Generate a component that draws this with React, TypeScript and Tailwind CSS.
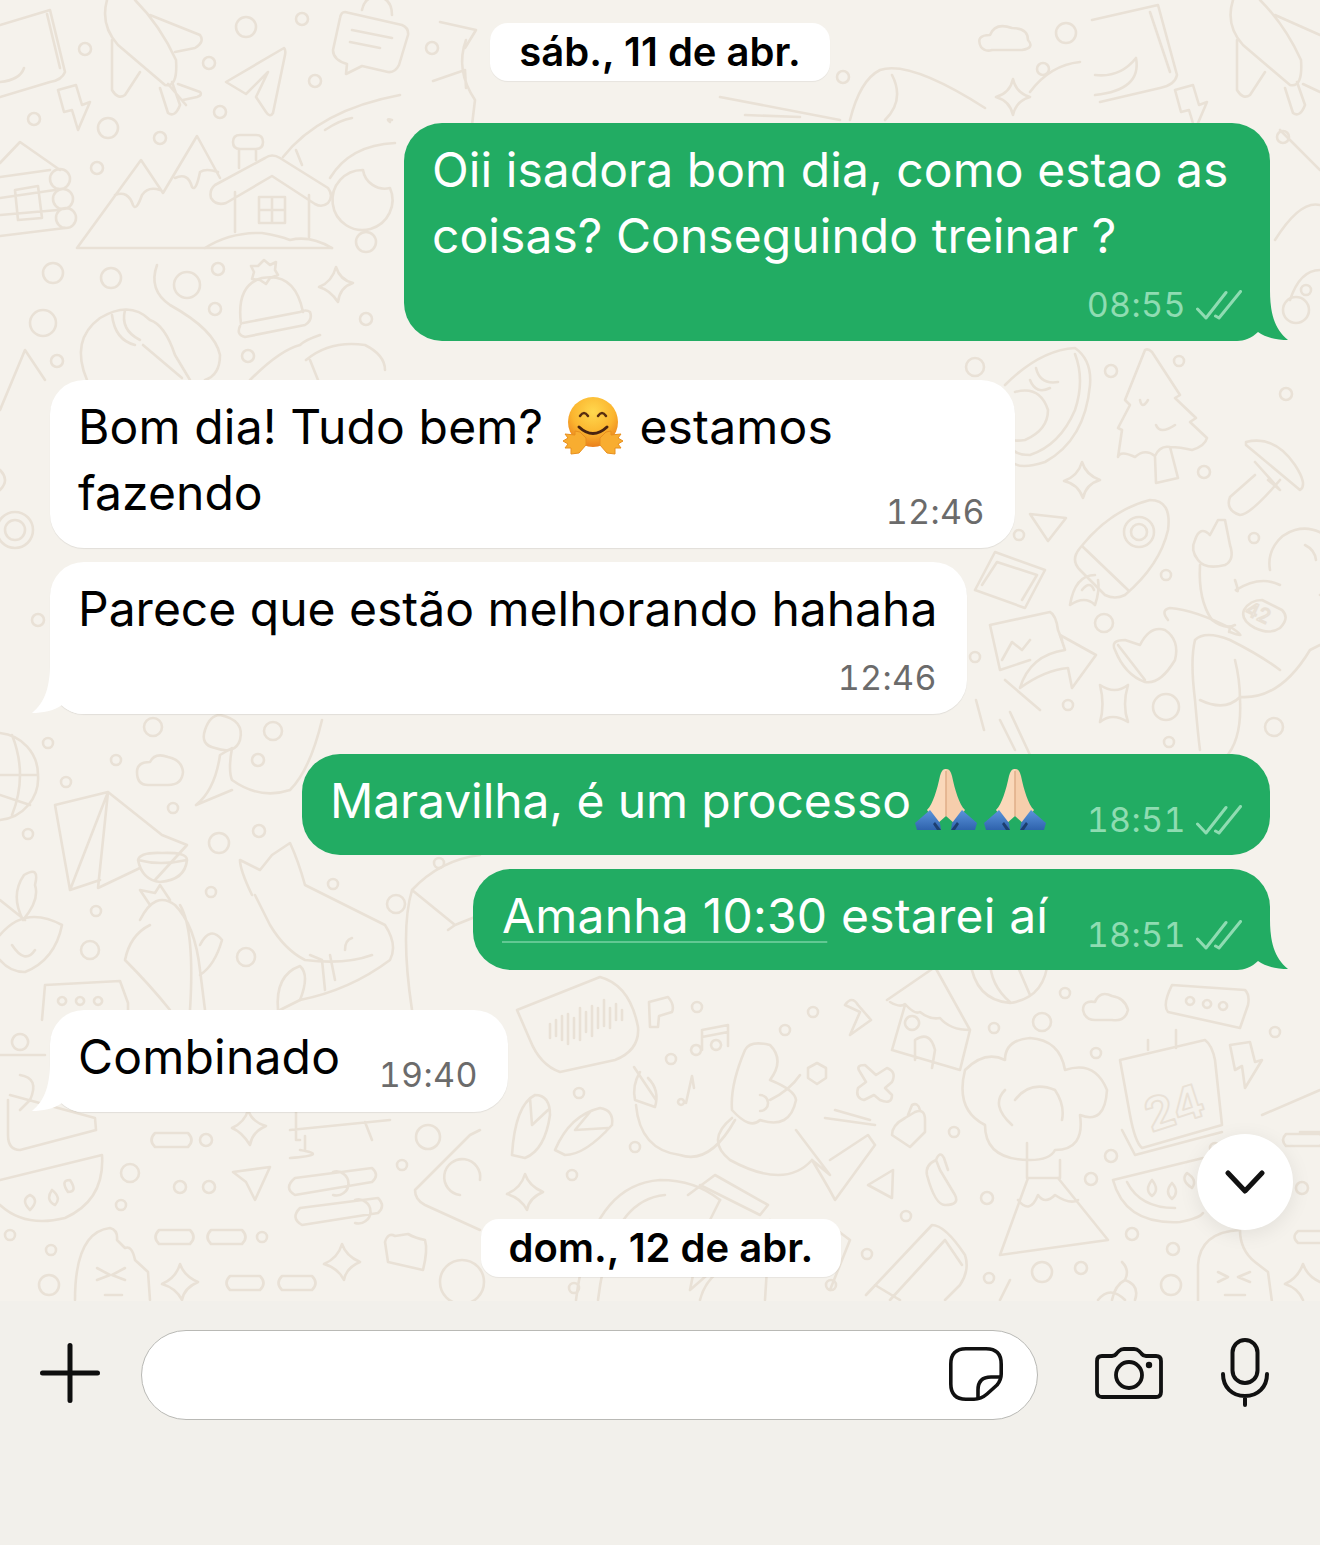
import type { ReactNode } from "react";

const circles: [number, number, number][] = [
  [34, 119, 6], [108, 128, 10], [160, 138, 6], [220, 112, 6], [97, 168, 6], [53, 273, 10], [111, 278, 10],
  [187, 285, 13], [218, 269, 6], [215, 309, 6], [366, 242, 10], [366, 319, 6], [43, 323, 13], [57, 361, 6],
  [248, 356, 6], [85, 49, 6], [246, 27, 10], [302, 19, 6], [209, 63, 6], [315, 81, 6], [432, 48, 6],
  [48, 743, 5], [116, 760, 5], [153, 727, 9], [273, 731, 9], [258, 760, 6], [66, 782, 5], [173, 808, 5],
  [28, 834, 5], [259, 831, 6], [219, 843, 10], [439, 863, 5], [211, 892, 5], [333, 884, 5], [96, 911, 5],
  [396, 904, 9], [90, 950, 9], [246, 957, 9], [428, 1137, 12], [206, 1140, 6], [402, 1165, 5], [130, 1173, 9],
  [180, 1187, 6], [209, 1187, 6], [121, 1205, 5], [10, 1235, 5], [51, 1250, 5], [262, 1237, 5], [49, 1285, 10],
  [462, 1282, 22], [975, 367, 9], [1111, 371, 6], [1179, 361, 5], [1286, 394, 6], [1204, 472, 6], [1019, 535, 5],
  [1254, 538, 5], [1166, 575, 5], [1104, 623, 9], [975, 657, 5], [1068, 705, 5], [1166, 707, 13], [1274, 727, 9],
  [1169, 742, 5], [697, 1007, 5], [813, 1012, 5], [785, 1030, 5], [1065, 993, 5], [1042, 1022, 9], [994, 1028, 5],
  [1275, 1032, 5], [1096, 1053, 5], [671, 1059, 5], [579, 1093, 5], [635, 1147, 5], [572, 1175, 5], [954, 1132, 5],
  [987, 1198, 6], [906, 1216, 5], [1042, 1272, 10], [1081, 1268, 6], [989, 1278, 5], [1111, 1156, 6], [1091, 1179, 6],
  [1132, 1234, 6], [1173, 1249, 6], [1171, 1285, 10], [1302, 1188, 6], [867, 1254, 5], [831, 1285, 5], [574, 1288, 5],
  [1066, 33, 10], [1043, 69, 6], [843, 77, 6], [1283, 137, 6], [15, 530, 18], [15, 530, 10], [1296, 310, 13],
  [1139, 532, 15], [1139, 532, 8], [38, 620, 6], [1306, 290, 5], [470, 1105, 5], [1215, 1148, 5],
];

const paths: string[] = [
  // top left: book, rocket, plane, chat bubble, sun
  "M0 25L50 10L65 72Q62 80 50 82L0 97M47 14L60 68M0 82Q20 80 24 68",
  "M107 0Q100 25 118 45L165 85Q178 88 176 60Q160 25 135 0M150 15L200 35Q205 42 195 48L175 52M112 40V90Q118 100 125 95L140 72",
  "M160 88L168 113Q175 118 180 105L172 82M178 84L200 92Q203 95 197 97L183 100M168 84L186 105",
  "M226 82L284 48Q286 50 285 55L273 113Q270 118 266 112L256 97L268 72L246 94Z",
  "M345 12L402 25Q409 28 408 35L399 65Q395 73 388 72L362 66L346 74L347 64Q333 60 333 50L340 18Q341 12 345 12ZM362 10Q365 -5 380 -3Q392 0 392 15M352 30L392 38M350 42L380 48",
  "M58 90L76 85L82 105L90 102L78 130L72 110L64 112Z",
  "M440 22L476 30L465 48M433 81L465 70L466 88M475 100L472 125M466 40Q455 70 475 100",
  // mountains and house
  "M77 248H332M77 248L141 160L163 193L197 136L220 178M115 195Q128 190 133 205Q136 212 142 195Q148 186 160 190M175 178Q188 172 192 187Q196 192 200 172Q206 168 218 172",
  "M215 185L265 158Q272 153 280 158L328 188Q334 196 328 203Q322 208 315 204L272 176L226 203Q216 206 211 198Q209 190 215 185ZM235 192V232M309 195V237M259 197H285V223H259ZM272 197V223M259 210H285",
  "M239 149V168M256 149V160M240 135H256Q263 135 263 142Q263 149 256 149H240Q233 149 233 142Q233 135 240 135Z",
  "M205 248Q230 232 262 233Q280 236 290 240Q310 235 332 248",
  "M0 163L20 142L60 170M0 177L50 170M0 198L55 190M0 215L58 210M0 236L65 228M15 190L38 186L42 218L18 220Z",
  "M60 169A10 10 0 1 1 60 189A10 10 0 1 1 60 169M63 189A10 10 0 1 1 63 209A10 10 0 1 1 63 189M66 208A10 10 0 1 1 66 228A10 10 0 1 1 66 208",
  "M363 170A30 30 0 1 0 390 188A22 22 0 0 1 363 170Z",
  "M283 157Q320 110 400 95M325 130Q340 120 352 118M392 120Q385 118 390 122M330 178Q350 145 395 143M296 150L302 165",
  "M241 324Q236 285 262 278Q295 272 303 312M240 326Q236 335 245 337L305 325Q313 320 310 312Q306 309 300 312L243 323",
  "M264 260L270 265L276 262L275 270L278 275L270 278L266 284L260 280L252 279L254 272L251 266L258 266Z",
  "M336 267Q340 280 353 283Q340 287 338 302Q330 290 319 287Q332 282 336 267Z",
  "M157 265Q148 290 170 305Q215 330 220 355Q220 375 205 380M87 380Q70 340 100 318Q130 300 150 320Q165 325 175 355L190 380M112 315Q115 340 135 345M125 310Q120 330 140 340M143 345L182 378",
  "M250 380Q280 350 300 345Q305 340 320 335M306 360Q330 340 365 345Q385 355 385 370M310 360L318 380",
  "M0 410L25 350L45 380M0 470Q10 480 0 490",
  // right side
  "M1005 385Q1040 350 1075 348Q1092 360 1090 385Q1085 440 1045 462Q1020 470 1012 462M1075 354Q1085 380 1075 410Q1060 445 1030 455Q1015 455 1012 448M1015 392Q1040 385 1048 410Q1048 430 1025 440Q1012 442 1012 438",
  "M1036 368Q1040 385 1058 382M1030 380Q1036 395 1050 388",
  "M1145 350Q1148 348 1152 352L1180 395L1175 398L1196 418L1190 422L1207 438Q1205 446 1192 450Q1180 447 1170 447Q1160 445 1155 456Q1145 448 1135 457Q1120 450 1118 457L1122 430L1118 428L1130 405L1125 400ZM1155 457L1156 483L1178 478L1170 447M1140 400Q1142 410 1148 400M1156 425Q1160 435 1175 425",
  "M1246 442Q1275 435 1295 465Q1308 485 1300 490L1246 445ZM1255 462L1280 490L1268 480M1255 475L1230 497Q1225 510 1240 515Q1250 515 1280 480",
  "M1082 462Q1086 475 1100 480Q1086 484 1083 498Q1078 484 1064 481Q1078 476 1082 462Z",
  "M1030 514L1066 518L1048 541Z",
  "M1080 548Q1110 510 1150 500Q1172 500 1168 530Q1160 565 1125 595Q1115 600 1105 595L1080 570Q1070 560 1080 548ZM1082 546L1128 590",
  "M1095 575Q1075 575 1070 605Q1085 595 1095 605Q1100 590 1098 580M1082 590Q1090 580 1094 590",
  "M1195 540Q1200 525 1210 535L1218 520L1225 520L1230 545Q1235 560 1225 565Q1205 570 1198 560Q1190 550 1195 540ZM1200 565Q1198 600 1212 620Q1225 630 1235 625M1235 580Q1240 595 1236 590",
  "M1270 570A35 35 0 1 1 1320 595M1305 545Q1315 550 1316 560M1236 590Q1260 575 1280 585M1232 628Q1250 640 1230 632",
  "M1244 610Q1250 600 1262 600L1282 610Q1290 618 1280 628Q1270 635 1255 628Q1240 620 1244 610Z",
  "M1168 620Q1160 610 1170 608Q1195 610 1230 628L1229 632M1115 650Q1110 640 1125 640L1140 645Q1150 625 1165 630Q1180 640 1175 660Q1160 685 1145 682Q1125 675 1115 650ZM1118 645L1145 680",
  "M1195 640Q1205 630 1230 640Q1260 655 1280 670M1195 640Q1190 660 1195 700Q1198 735 1200 750M1235 660Q1240 680 1240 700Q1242 740 1225 758M1200 700Q1225 712 1240 697M1240 697Q1280 700 1310 650L1320 645",
  "M975 590L995 552L1045 570L1025 608ZM982 585L997 562L1037 575L1022 600",
  "M990 625L1050 612Q1056 615 1058 630L1062 640M990 625L1000 670L1030 660M1002 660L1012 642L1022 650L1030 640",
  "M1020 688Q1030 655 1065 650L1060 635L1096 655L1072 688L1068 668Q1045 670 1020 688Z",
  "M1100 685Q1115 695 1128 685Q1122 705 1128 722Q1112 712 1100 722Q1105 705 1100 685Z",
  "M976 700L984 730M1005 680L1040 710M1010 712L1030 755M1000 720L1015 750",
  "M1030 92Q1050 65 1080 62M850 120Q860 80 880 70Q910 60 985 108M892 75Q905 100 885 120M1013 79Q1016 93 1030 97Q1016 101 1013 115Q1010 101 996 97Q1010 93 1013 79Z",
  "M981 47Q975 35 990 35Q995 22 1012 28Q1028 28 1028 40Q1035 48 1022 50H992Q985 52 981 47Z",
  "M720 97L840 120M745 115L800 117",
  // right top rocket and book
  "M1092 20L1158 5L1177 75Q1175 85 1160 88L1100 102M1150 12L1170 72M1095 75Q1120 78 1136 58Q1142 90 1095 95",
  "M1233 0Q1225 25 1243 45L1290 85Q1303 88 1301 60Q1285 25 1260 0M1275 15L1320 35M1237 40V90Q1243 100 1250 95L1265 72",
  "M1175 90L1193 85L1199 105L1207 102L1195 130L1189 110L1181 112Z",
  "M1285 88L1293 113Q1300 118 1305 105L1297 82M1303 84L1320 92",
  "M1280 130L1320 170M1275 240Q1300 200 1320 205M1290 300Q1300 270 1320 270",
  // middle left
  "M0 733A42 42 0 0 1 38 775A42 42 0 0 1 0 820M0 775H38M12 735Q28 775 12 815M0 795L30 805",
  "M220 715Q245 720 240 740Q235 755 215 748Q200 745 205 730Q210 715 220 715Z",
  "M196 805Q215 790 220 755L232 748Q228 770 232 780Q260 800 290 790Q310 770 322 720M196 805L232 790",
  "M137 772Q137 762 150 762Q155 752 168 757Q182 760 183 772Q182 785 168 785H148Q137 785 137 772Z",
  "M55 805L108 792L162 835L187 845L155 880M55 805L70 890L108 792M70 890L100 880M108 792L98 888L140 868",
  "M138 860Q140 852 162 853Q187 852 187 860Q185 880 160 882Q142 880 138 860ZM138 860Q160 866 187 860",
  "M0 935Q25 905 62 925Q55 960 25 972Q10 972 0 960M23 920Q10 895 24 875Q40 865 35 885Q40 900 23 920ZM0 900L25 920M12 945Q25 965 35 950",
  "M140 920Q155 890 175 905Q195 925 200 970L205 1010M180 905Q195 930 190 1010M150 925Q130 935 125 960Q150 985 170 1010M200 945Q210 925 222 940Q215 965 200 975",
  "M150 905L140 890L155 893L160 885L170 900",
  "M240 860L260 870L272 855L290 843Q298 860 305 885L385 925Q398 945 390 960Q350 990 300 1000L280 1010M255 895L270 925Q285 950 305 960Q345 965 372 955M252 895Q240 870 240 860",
  "M310 955L322 960L325 990M330 955L335 980M345 950Q345 940 352 938",
  "M278 1010Q275 975 300 966Q310 975 300 1000",
  "M480 855Q440 860 412 890L455 925L480 915M412 890Q400 930 412 1010M455 925L448 930",
  "M45 985L120 981L128 1003V1010M45 985L42 1020M62 1005A4 4 0 1 1 62.1 1005M80 1005A4 4 0 1 1 80.1 1005M98 1005A4 4 0 1 1 98.1 1005",
  "M0 1055H45M20 1050A8 8 0 1 1 20.1 1050",
  "M10 1095L95 1118L96 1130L20 1150Q8 1150 8 1135V1100M20 1075Q40 1078 30 1100L20 1110",
  "M0 1180L102 1155Q105 1200 65 1218Q25 1228 0 1205M30 1195Q20 1200 30 1210Q40 1200 30 1195ZM52 1190Q45 1200 55 1205Q62 1198 52 1190ZM70 1180Q60 1180 68 1192Q78 1192 70 1180Z",
  "M155 1133H188Q195 1140 188 1147H155Q148 1140 155 1133ZM159 1230H190Q197 1237 190 1244H159Q152 1237 159 1230ZM211 1230H242Q249 1237 242 1244H211Q204 1237 211 1230Z",
  "M230 1276H260Q267 1283 260 1290H230Q223 1283 230 1276ZM282 1276H312Q319 1283 312 1290H282Q275 1283 282 1276Z",
  "M248 1110Q252 1122 266 1126Q252 1132 250 1145Q242 1132 232 1128Q245 1122 248 1110Z",
  "M233 1172L270 1167L255 1200L246 1182Z",
  "M295 1178L372 1168Q380 1175 372 1182L295 1195Q283 1188 295 1178ZM300 1208L378 1198Q386 1206 378 1213L302 1225Q290 1218 300 1208ZM333 1172A12 12 0 1 1 333.1 1195M355 1200A12 12 0 1 1 355.1 1223",
  "M296 1112V1140H300M290 1130L390 1120M300 1150Q330 1155 290 1158M305 1136V1150M365 1122L372 1140",
  "M415 1190L470 1135L480 1130M415 1190Q415 1200 425 1205L480 1230M460 1195A18 18 0 1 1 480 1180",
  "M180 1264Q184 1276 198 1282Q184 1288 182 1300Q176 1288 162 1284Q176 1278 180 1264ZM342 1244Q346 1256 360 1262Q346 1268 344 1280Q338 1268 324 1264Q338 1258 342 1244Z",
  "M75 1300Q75 1232 110 1228Q118 1230 117 1240L125 1248Q132 1245 135 1260L148 1272L150 1300M97 1268L110 1275L97 1280M125 1268L112 1275L125 1280M105 1295H122",
  "M385 1242Q388 1232 395 1236L408 1234Q415 1238 425 1240Q428 1250 423 1270L388 1262Z",
  // bottom middle
  "M517 1010L600 977Q630 985 638 1027Q640 1050 615 1060L560 1072Q540 1065 530 1040Z",
  "M550 1038V1024M556 1036V1020M562 1040V1016M568 1044V1014M574 1038V1018M580 1040V1008M586 1032V1012M592 1036V1006M598 1028V1008M604 1026V1000M610 1028V1008M616 1020V1004M622 1020V1010",
  "M649 1002L668 997Q675 1005 672 1012L659 1016L658 1027H650Z",
  "M696 1055A5 5 0 1 1 696.1 1055M716 1050A5 5 0 1 1 716.1 1050M702 1050V1030L728 1025V1046M702 1037L728 1032",
  "M681 1105A3 3 0 1 1 681.1 1105M686 1103L692 1076L694 1088",
  "M845 1005Q852 995 858 1005L871 1020L850 1035L860 1012Z",
  "M887 1000L935 967L970 1030L960 1070L892 1050L905 1005M890 1002Q900 1008 905 1004Q915 1015 920 1012Q930 1020 940 1018Q950 1030 970 1030M915 1060V1040Q930 1030 935 1050L932 1068M912 1030A7 7 0 1 1 912.1 1030",
  "M970 960Q975 1000 1010 1003Q1045 998 1048 960M990 960Q990 985 1010 1002M1015 960L1030 995",
  "M1083 1010Q1083 1000 1095 1002Q1100 990 1112 996Q1125 998 1128 1010Q1125 1022 1112 1020H1095Q1085 1020 1083 1010Z",
  "M1172 985L1245 990Q1250 995 1248 1005L1240 1028L1168 1012Q1162 1005 1172 985ZM1190 1005A4 4 0 1 1 1190.1 1005M1207 1008A4 4 0 1 1 1207.1 1008M1223 1010A4 4 0 1 1 1223.1 1010",
  "M1120 1060L1205 1040Q1212 1045 1215 1060L1222 1125L1142 1148Q1135 1142 1130 1115ZM1122 1130L1135 1155L1222 1132M1148 1050V1040M1176 1048V1030",
  "M1230 1045L1250 1042L1255 1062L1262 1060L1245 1088L1242 1066L1235 1070Z",
  "M1262 1115L1320 1090",
  "M985 1125Q955 1110 965 1070Q985 1050 1005 1060Q1005 1040 1030 1038Q1060 1040 1065 1070Q1095 1060 1107 1090Q1105 1125 1080 1115Q1085 1150 1055 1150Q1050 1160 1030 1160Q985 1160 985 1125ZM1015 1100Q1030 1080 1055 1090Q1065 1105 1062 1120M1005 1090Q990 1105 1012 1125",
  "M1027 1143V1178H1060V1160M1028 1178L1000 1255L1108 1240L1058 1178M1018 1200Q1030 1215 1038 1195Q1045 1205 1055 1195Q1070 1205 1078 1200",
  "M1113 1180L1203 1158M1113 1180Q1125 1225 1180 1222Q1200 1218 1203 1213M1127 1182Q1140 1208 1175 1208",
  "M1152 1180Q1144 1190 1152 1196Q1160 1190 1152 1180ZM1172 1183Q1164 1192 1172 1199Q1180 1192 1172 1183ZM1187 1173Q1180 1180 1192 1188Q1198 1180 1187 1173Z",
  "M1198 1302V1265Q1200 1232 1240 1230Q1240 1250 1255 1262L1268 1272L1272 1302M1218 1272L1228 1277L1218 1282M1250 1272L1238 1277L1250 1282M1225 1295H1245",
  "M1300 1132H1326M1298 1231H1326Q1333 1237 1326 1243H1298Q1291 1237 1298 1231ZM1286 1134H1320Q1326 1140 1320 1146H1286Q1280 1140 1286 1134Z",
  "M1303 1264Q1307 1276 1320 1282M1303 1300Q1298 1288 1285 1284Q1298 1278 1303 1264",
  "M927 1175Q925 1165 936 1160L940 1170L955 1195Q960 1205 945 1205Q935 1205 927 1175ZM936 1160Q940 1150 944 1158L948 1170",
  "M868 1185L893 1170L892 1198Z",
  "M892 1135Q892 1125 905 1118L915 1112Q925 1108 925 1120V1132L910 1147ZM908 1115L912 1105Q918 1102 920 1110",
  "M1098 1300Q1110 1285 1125 1300M1122 1262Q1130 1270 1125 1280Q1115 1285 1112 1300M1125 1280Q1140 1285 1135 1300",
  "M512 1155Q515 1105 535 1095Q550 1095 550 1115Q545 1150 525 1158ZM530 1098L532 1125L548 1110",
  "M555 1150Q570 1115 600 1108Q614 1110 612 1125Q585 1155 565 1155ZM590 1112L575 1130L608 1128",
  "M525 1174Q529 1186 543 1192Q529 1198 527 1210Q521 1198 507 1194Q521 1188 525 1174Z",
  "M634 1067L656 1100M640 1072Q632 1085 635 1100L655 1107Q660 1090 648 1078",
  "M636 1105Q640 1150 680 1155Q710 1165 735 1120M732 1118Q705 1140 730 1160Q785 1190 812 1160Q830 1190 835 1200L875 1145L868 1135L830 1160M796 1130L830 1175L812 1160M835 1110L870 1120M825 1118L875 1125",
  "M745 1050Q730 1085 732 1110Q750 1130 760 1120Q790 1130 796 1100Q795 1090 770 1080Q785 1060 770 1045Q750 1040 745 1050Z",
  "M760 1095A8 8 0 1 1 760.1 1111M800 1075Q790 1090 770 1100",
  "M817 1063L826 1068V1078L817 1084L808 1078V1068Z",
  "M860 1072Q855 1065 865 1065L876 1075L887 1068Q897 1072 892 1082L885 1088L892 1095Q892 1105 880 1100L874 1095L864 1100Q855 1098 858 1088L866 1082Z",
  "M576 1300Q590 1185 660 1180Q695 1180 720 1200M598 1300Q610 1200 665 1195",
  "M688 1195L715 1175L768 1205L760 1215L700 1185M690 1290L770 1220L765 1300M720 1200L700 1240L690 1290",
  "M700 1300Q710 1260 770 1255M830 1290L850 1240L830 1225",
  "M866 1295L932 1225Q945 1225 965 1255Q970 1270 960 1285L945 1300M890 1300L945 1240L962 1265M875 1285L900 1300",
  "M1000 1300L1010 1280",
];

const Hug = () => (
  <svg width="62" height="62" viewBox="0 0 62 62" className="ml-[5px] mr-[2px] inline-block align-[-14px]">
    <defs>
      <radialGradient id="hugFace" cx="50%" cy="30%" r="70%">
        <stop offset="0%" stopColor="#ffd84e" />
        <stop offset="60%" stopColor="#fbb52f" />
        <stop offset="100%" stopColor="#ea7f1c" />
      </radialGradient>
    </defs>
    <circle cx="31" cy="26" r="25" fill="url(#hugFace)" />
    <path d="M18 20Q22 14 26 20M36 20Q40 14 44 20" fill="none" stroke="#5a2e10" strokeWidth="2.5" strokeLinecap="round" />
    <path d="M17 31Q31 44 45 31" fill="none" stroke="#4a2410" strokeWidth="3" strokeLinecap="round" />
    <path d="M18 36L13 35L13 39L3 38L6 42L1 45L6 48L3 52L9 52L9 58L17 57L24 49L24 42Z" fill="#f8ad30" stroke="#e88f1e" strokeWidth="1" />
    <path d="M44 36L49 35L49 39L59 38L56 42L61 45L56 48L59 52L53 52L53 58L45 57L38 49L38 42Z" fill="#f8ad30" stroke="#e88f1e" strokeWidth="1" />
  </svg>
);

const Pray = () => (
  <svg width="62" height="63" viewBox="0 0 62 63" className="shrink-0">
    <defs>
      <linearGradient id="praySleeve" x1="0" y1="0" x2="0" y2="1">
        <stop offset="0%" stopColor="#5b94dc" />
        <stop offset="100%" stopColor="#2f63ad" />
      </linearGradient>
    </defs>
    <path d="M31 1Q27 0 25 8C22 22 18 36 12 42L22 56L31 48Z" fill="#fad8ba" />
    <path d="M31 1Q35 0 37 8C40 22 44 36 50 42L40 56L31 48Z" fill="#f6ceac" />
    <path d="M31 3V48" stroke="#dfae88" strokeWidth="1.5" />
    <path d="M0 55L15 42L25 55L26 62H2Z" fill="url(#praySleeve)" />
    <path d="M62 55L47 42L37 55L36 62H60Z" fill="url(#praySleeve)" />
    <path d="M20 54L26 62H22L18 56Z" fill="#1d3f70" />
    <path d="M42 54L36 62H40L44 56Z" fill="#1d3f70" />
  </svg>
);

const Ticks = () => (
  <svg width="46" height="30" viewBox="0 0 46 30" fill="none" stroke="#8fdcb2" strokeWidth="3" strokeLinecap="round" strokeLinejoin="round">
    <path d="M1.5 19L10 28L30 2.5" />
    <path d="M19.5 26L23 28L44.5 1.5" />
  </svg>
);

const Time = ({ value, sent }: { value: string; sent?: boolean }) => (
  <div className="relative flex h-[40px] items-center gap-[10px]">
    <span className={`text-[34px] leading-none tabular-nums tracking-[0.4px] ${sent ? "text-[#8fdcb2]" : "text-[#6b6b6b]"}`}>{value}</span>
    {sent && <Ticks />}
  </div>
);

const Tail = ({ side, color }: { side: "left" | "right"; color: string }) => (
  <svg
    width="60"
    height="50"
    viewBox="0 0 60 50"
    className={side === "right" ? "absolute -right-[18px] bottom-0" : "absolute -left-[18px] bottom-0 -scale-x-100"}
    fill={color}
  >
    <path d="M42 0C42 20 46 38 60 49C50 49 38 47 30 41C24 47 16 50 9 50L0 50L0 0Z" />
  </svg>
);

const DatePill = ({ children, className }: { children: ReactNode; className: string }) => (
  <div className={`flex h-[58px] items-center justify-center self-center rounded-[18px] bg-white text-[40px] font-semibold text-black shadow-[0_1px_1px_rgba(0,0,0,0.06)] ${className}`}>
    {children}
  </div>
);

const Doodles = () => (
  <svg
    width="1320"
    height="1301"
    viewBox="0 0 1320 1301"
    className="absolute inset-0"
    fill="none"
    stroke="#e9e1d6"
    strokeWidth="2.6"
    strokeLinecap="round"
    strokeLinejoin="round"
  >
    {circles.map(([cx, cy, r], i) => (
      <circle key={i} cx={cx} cy={cy} r={r} />
    ))}
    {paths.map((d, i) => (
      <path key={i} d={d} />
    ))}
    <text x="1245" y="622" fontSize="20" fontFamily="Inter, sans-serif" fill="none" strokeWidth="1.6" transform="rotate(25 1263 615)">42</text>
    <text x="1142" y="1125" fontSize="46" fontWeight="700" fontFamily="Inter, sans-serif" fill="none" strokeWidth="1.8" transform="rotate(-18 1170 1100)">24</text>
  </svg>
);

export default function App() {
  return (
    <div className="flex h-[1545px] w-[1320px] flex-col overflow-hidden bg-[#f2f0eb] font-['Inter',sans-serif]">
      <div className="relative h-[1301px] bg-[#f5f2ec]">
        <Doodles />

        <div className="relative flex flex-col px-[50px] pt-[23px]">
          <DatePill className="w-[340px]">sáb., 11 de abr.</DatePill>

          <div className="relative mt-[42px] h-[218px] w-[866px] self-end rounded-[38px] bg-[#22ac63] pl-[28px] pr-[28px] pt-[14px] text-white">
            <Tail side="right" color="#22ac63" />
            <p className="relative text-[48px] leading-[66px] tracking-[0.06px]">Oii isadora bom dia, como estao as<br />coisas? Conseguindo treinar ?</p>
            <div className="mt-[16px] flex justify-end"><Time value="08:55" sent /></div>
          </div>

          <div className="relative mt-[39px] h-[168px] w-[965px] rounded-[34px] bg-white pl-[28px] pr-[30px] pt-[14px] text-black shadow-[0_1px_1px_rgba(0,0,0,0.08)]">
            <div className="text-[48px] leading-[66px] tracking-[0.15px]">Bom dia! Tudo bem? <Hug /> estamos</div>
            <div className="flex justify-between">
              <span className="text-[48px] leading-[66px] tracking-[0.06px]">fazendo</span>
              <div className="mt-[32px]"><Time value="12:46" /></div>
            </div>
          </div>

          <div className="relative mt-[14px] h-[152px] w-[917px] rounded-[34px] bg-white pl-[28px] pr-[30px] pt-[14px] text-black shadow-[0_1px_1px_rgba(0,0,0,0.08)]">
            <Tail side="left" color="#ffffff" />
            <p className="relative whitespace-nowrap text-[48px] leading-[66px]">Parece que estão melhorando hahaha</p>
            <div className="mt-[16px] flex justify-end"><Time value="12:46" /></div>
          </div>

          <div className="mt-[40px] flex h-[101px] w-[968px] justify-between self-end rounded-[38px] bg-[#22ac63] pl-[28px] pr-[28px] pt-[14px] text-white">
            <div className="flex h-[66px] items-start">
              <span className="text-[48px] leading-[66px] tracking-[-0.1px]">Maravilha, é um processo</span>
              <div className="ml-[4px] flex gap-[7px]"><Pray /><Pray /></div>
            </div>
            <div className="mt-[32px]"><Time value="18:51" sent /></div>
          </div>

          <div className="relative mt-[14px] flex h-[101px] w-[797px] justify-between self-end rounded-[38px] bg-[#22ac63] pl-[29px] pr-[28px] pt-[14px] text-white">
            <Tail side="right" color="#22ac63" />
            <span className="relative text-[48px] leading-[66px] tracking-[0.2px]">
              <span className="underline decoration-[#62c893] decoration-2 underline-offset-[8px]">Amanha 10:30</span> estarei aí
            </span>
            <div className="mt-[32px]"><Time value="18:51" sent /></div>
          </div>

          <div className="relative mt-[40px] flex h-[102px] w-[458px] justify-between rounded-[34px] bg-white pl-[28px] pr-[30px] pt-[14px] text-black shadow-[0_1px_1px_rgba(0,0,0,0.08)]">
            <Tail side="left" color="#ffffff" />
            <span className="relative text-[48px] leading-[66px] tracking-[0.2px]">Combinado</span>
            <div className="mt-[31px]"><Time value="19:40" /></div>
          </div>

          <DatePill className="ml-[2px] mt-[107px] w-[360px]">dom., 12 de abr.</DatePill>
        </div>

        <div className="absolute bottom-[71px] right-[27px] flex h-[96px] w-[96px] items-center justify-center rounded-full bg-white shadow-[0_4px_20px_rgba(0,0,0,0.08)]">
          <svg width="40" height="24" viewBox="0 0 40 24" fill="none" stroke="#111" strokeWidth="5" strokeLinecap="round" strokeLinejoin="round">
            <path d="M3 3L20 21L37 3" />
          </svg>
        </div>
      </div>

      <div className="flex items-center pl-[40px] pt-[29px]">
        <svg width="60" height="60" viewBox="0 0 60 60" stroke="#0f0f0f" strokeWidth="5" strokeLinecap="round" className="mb-[4px]">
          <path d="M2.5 30H57.5M30 2.5V57.5" />
        </svg>
        <div className="ml-[41px] flex h-[90px] w-[897px] items-center justify-end rounded-[45px] border border-[#b9b9b5] bg-white pr-[34px]">
          <svg width="54" height="54" viewBox="0 0 54 54" fill="none" stroke="#111" strokeWidth="3.6" strokeLinejoin="round" className="mb-[2px]">
            <path d="M17 1.8H37Q52.2 1.8 52.2 17V27Q52.2 33 48 38L38 47Q32 52.2 25 52.2H17Q1.8 52.2 1.8 37V17Q1.8 1.8 17 1.8Z" />
            <path d="M52 30H42Q29 30 29 43V52" />
          </svg>
        </div>
        <svg width="68" height="52" viewBox="0 0 68 52" fill="none" stroke="#111" strokeWidth="3.8" strokeLinejoin="round" className="mb-[4px] ml-[57px]">
          <path d="M2 14Q2 9 7 9H17Q20 9 22 6L24 4Q26 2 29 2H39Q42 2 44 4L46 6Q48 9 51 9H61Q66 9 66 14V45Q66 50 61 50H7Q2 50 2 45Z" />
          <circle cx="34" cy="28" r="13" />
          <circle cx="54" cy="18" r="3.2" fill="#111" stroke="none" />
        </svg>
        <svg width="50" height="70" viewBox="0 0 50 70" fill="none" stroke="#111" strokeWidth="4" strokeLinecap="round" className="mb-[5px] ml-[57px]">
          <rect x="12.5" y="2" width="25" height="43" rx="12.5" />
          <path d="M3 36C3 49 12 58 25 58C38 58 47 49 47 36M25 58V67" />
        </svg>
      </div>
    </div>
  );
}
